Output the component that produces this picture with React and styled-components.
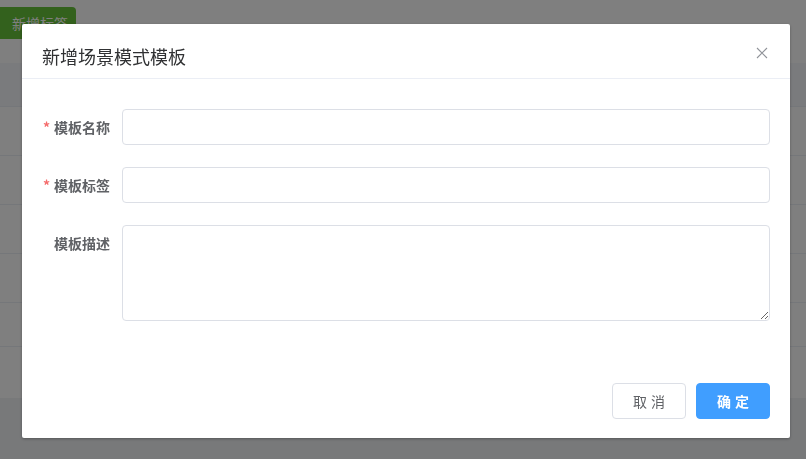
import React from "react";
import styled, { createGlobalStyle } from "styled-components";

const GlobalStyle = createGlobalStyle`
  html, body {
    margin: 0;
    padding: 0;
    background: #f0f2f5;
    font-family: "Helvetica Neue", "Noto Sans CJK SC", "Liberation Sans", sans-serif;
  }
  * { box-sizing: border-box; }
`;

// page underneath the dialog
const Page = styled.div`
  width: 806px;
  height: 459px;
  background: #f0f2f5;
  overflow: hidden;
`;

const Panel = styled.div`
  background: #fff;
  height: 398px;
`;

const Toolbar = styled.div`
  height: 63px;
  padding-top: 7px;
`;

const AddButton = styled.button`
  height: 32px;
  width: 76px;
  border: none;
  border-radius: 0 4px 4px 0;
  background: #67c23a;
  color: #fff;
  font-family: inherit;
  font-size: 14px;
  padding: 0 0 0 12px;
  text-align: left;
`;

const TableRow = styled.div`
  height: ${({ $h }) => $h}px;
  border-bottom: 1px solid #ebeef5;
  background: ${({ $head }) => ($head ? "#f5f7fa" : "#fff")};
`;

// modal
const Overlay = styled.div`
  position: fixed;
  inset: 0;
  background: rgba(0, 0, 0, 0.5);
`;

const Dialog = styled.div`
  margin: 24px 0 0 22px;
  width: 768px;
  background: #fff;
  border-radius: 2px;
  box-shadow: 0 1px 3px rgba(0, 0, 0, 0.3);
`;

const Header = styled.div`
  position: relative;
  padding: 20px 20px 10px;
  border-bottom: 1px solid #ebeef5;
`;

const Title = styled.span`
  display: block;
  font-size: 18px;
  line-height: 24px;
  color: #303133;
`;

const Close = styled.button`
  position: absolute;
  top: 21px;
  right: 20px;
  width: 16px;
  height: 16px;
  padding: 0;
  border: none;
  background: none;
  color: #909399;
  display: flex;
  align-items: center;
  justify-content: center;
`;

const Body = styled.div`
  padding: 30px 20px;
`;

const FormItem = styled.div`
  display: flex;
  align-items: flex-start;
  margin-bottom: 22px;
`;

const Label = styled.label`
  width: 80px;
  flex-shrink: 0;
  padding-right: 12px;
  text-align: right;
  font-size: 14px;
  font-weight: 700;
  line-height: 36px;
  color: #606266;
  &::before {
    content: ${({ $required }) => ($required ? '"*"' : '""')};
    color: #f56c6c;
    margin-right: 4px;
  }
`;

const Input = styled.input`
  flex: 1;
  height: 36px;
  border: 1px solid #dcdfe6;
  border-radius: 4px;
  padding: 0 15px;
  font-size: 14px;
  color: #606266;
  outline: none;
`;

const TextArea = styled.textarea`
  flex: 1;
  height: 96px;
  border: 1px solid #dcdfe6;
  border-radius: 4px;
  padding: 5px 15px;
  font-family: inherit;
  font-size: 14px;
  color: #606266;
  resize: vertical;
  outline: none;
  display: block;
`;

const Footer = styled.div`
  display: flex;
  justify-content: flex-end;
  gap: 10px;
  padding: 10px 20px 19px;
`;

const Button = styled.button`
  height: 36px;
  width: 74px;
  border-radius: 4px;
  font-family: inherit;
  font-size: 14px;
  font-weight: ${({ $primary }) => ($primary ? 700 : 400)};
  border: 1px solid ${({ $primary }) => ($primary ? "#409eff" : "#dcdfe6")};
  background: ${({ $primary }) => ($primary ? "#409eff" : "#fff")};
  color: ${({ $primary }) => ($primary ? "#fff" : "#606266")};
  letter-spacing: 4px;
  padding: 0 0 0 4px;
`;

export default function App() {
  const rows = [44, 49, 49, 49, 49, 44];
  return (
    <>
      <GlobalStyle />
      <Page>
        <Panel>
          <Toolbar>
            <AddButton>新增标签</AddButton>
          </Toolbar>
          {rows.map((h, i) => (
            <TableRow key={i} $h={h} $head={i === 0} />
          ))}
        </Panel>
      </Page>
      <Overlay>
        <Dialog>
          <Header>
            <Title>新增场景模式模板</Title>
            <Close aria-label="close">
              <svg width="12" height="12" viewBox="0 0 12 12">
                <path d="M1 1L11 11M11 1L1 11" stroke="currentColor" strokeWidth="1.1" fill="none" />
              </svg>
            </Close>
          </Header>
          <Body>
            <FormItem>
              <Label $required>模板名称</Label>
              <Input />
            </FormItem>
            <FormItem>
              <Label $required>模板标签</Label>
              <Input />
            </FormItem>
            <FormItem>
              <Label>模板描述</Label>
              <TextArea />
            </FormItem>
          </Body>
          <Footer>
            <Button>取消</Button>
            <Button $primary>确定</Button>
          </Footer>
        </Dialog>
      </Overlay>
    </>
  );
}
